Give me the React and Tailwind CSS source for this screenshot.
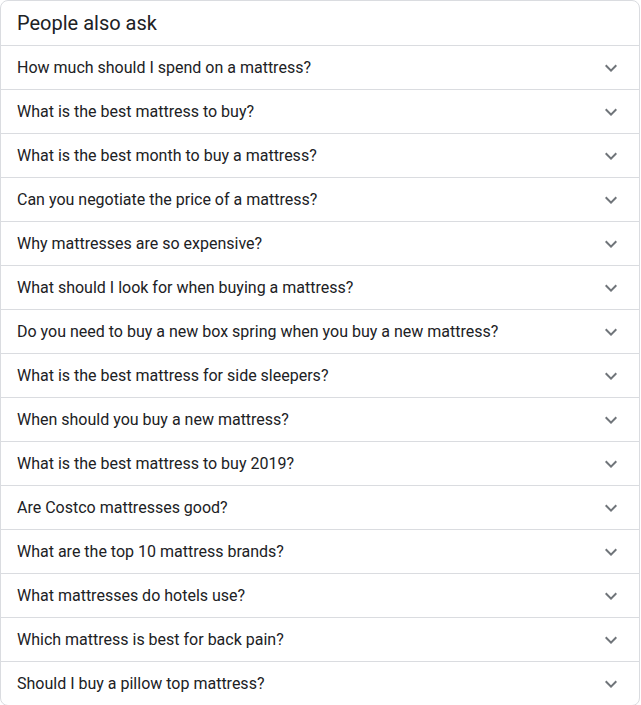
import React from 'react';

const questions = [
    'How much should I spend on a mattress?',
    'What is the best mattress to buy?',
    'What is the best month to buy a mattress?',
    'Can you negotiate the price of a mattress?',
    'Why mattresses are so expensive?',
    'What should I look for when buying a mattress?',
    'Do you need to buy a new box spring when you buy a new mattress?',
    'What is the best mattress for side sleepers?',
    'When should you buy a new mattress?',
    'What is the best mattress to buy 2019?',
    'Are Costco mattresses good?',
    'What are the top 10 mattress brands?',
    'What mattresses do hotels use?',
    'Which mattress is best for back pain?',
    'Should I buy a pillow top mattress?',
];

const ExpandIcon = () => (
    <svg width="24" height="24" viewBox="0 0 24 24" className="fill-[#70757a] shrink-0">
        <path d="M16.59 8.59L12 13.17 7.41 8.59 6 10l6 6 6-6z" />
    </svg>
);

export default function App() {
    return (
        <div className="w-[640px] font-['Roboto',_'Liberation_Sans',_sans-serif] text-[#202124] bg-white">
            <div className="border border-[#dadce0] rounded-lg overflow-hidden">
                <div className="h-[44px] flex items-center px-4">
                    <h2 className="text-[20px] leading-6">People also ask</h2>
                </div>
                {questions.map((q) => (
                    <div key={q} className="h-[44px] border-t border-[#dadce0] flex items-center justify-between pl-4 pr-4">
                        <span className="text-[16px] leading-6">{q}</span>
                        <ExpandIcon />
                    </div>
                ))}
            </div>
        </div>
    );
}
